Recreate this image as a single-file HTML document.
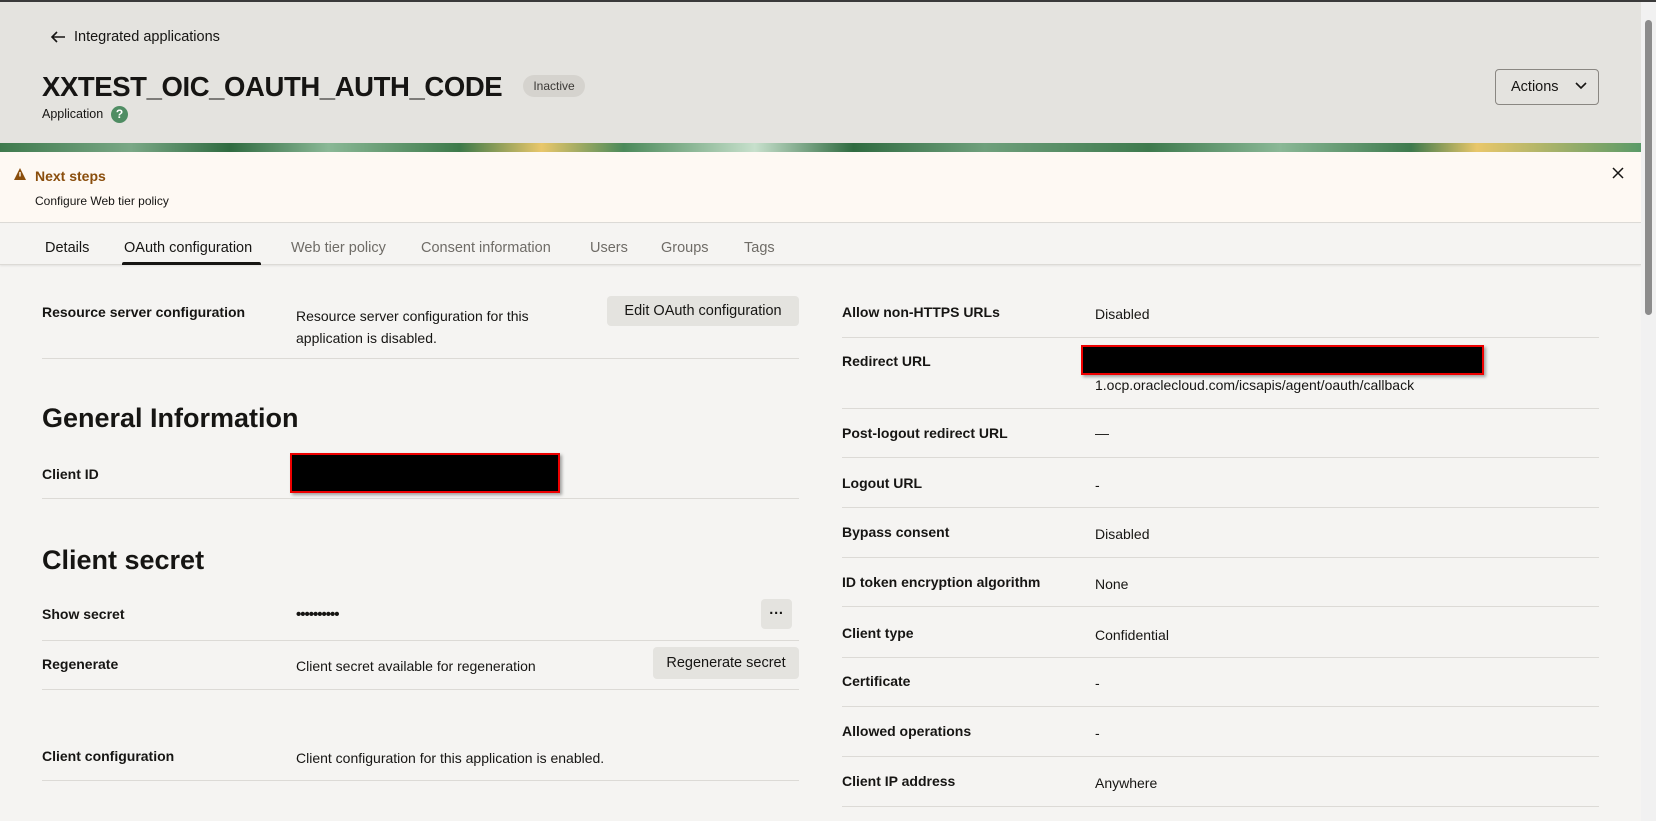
<!DOCTYPE html>
<html><head><meta charset="utf-8"><style>
*{margin:0;padding:0;box-sizing:border-box}
body{width:1656px;height:821px;overflow:hidden;background:#f5f4f2;font-family:"Liberation Sans",sans-serif;color:#161513;position:relative}
.a{position:absolute;line-height:18px;white-space:nowrap}
.l{font-size:14px;font-weight:bold}
.v{font-size:14px}
.hr{position:absolute;height:1px;background:#dcdad6}
.btn{position:absolute;background:#e4e3df;border-radius:4px;font-size:14.5px;display:flex;align-items:center;justify-content:center}
.red{position:absolute;background:#000;border:2px solid #e00;box-shadow:2px 2px 3px rgba(0,0,0,.35)}
.tab{position:absolute;top:239px;font-size:14.5px;color:#6f6c67;line-height:18px}
</style></head><body>
<div style="position:absolute;left:0;top:0;width:1656px;height:2px;background:#3a3a3a"></div>
<div style="position:absolute;left:0;top:2px;width:1641px;height:141px;background:#e4e3df"></div>
<div style="position:absolute;left:0;top:143px;width:1641px;height:9px;background:linear-gradient(90deg,#3e7a4d 0%,#7aa886 8%,#2f6b40 14%,#8ab896 20%,#3d7a4a 28%,#e9c76a 33%,#4b8a5a 38%,#c7e0cc 46%,#2f6b40 52%,#6fa07c 60%,#3e7a4d 70%,#8ab896 78%,#3e7a4d 86%,#e9c76a 90%,#5a9a68 100%)"></div>
<svg style="position:absolute;left:50px;top:30px" width="16" height="14" viewBox="0 0 16 14"><path d="M15 7H2M7 2L2 7l5 5" stroke="#161513" stroke-width="1.6" fill="none"/></svg>
<div class="a" style="left:74px;top:28px;font-size:14.5px">Integrated applications</div>
<div class="a" style="left:42px;top:70px;font-size:27.5px;font-weight:bold;line-height:34px;letter-spacing:-0.4px">XXTEST_OIC_OAUTH_AUTH_CODE</div>
<div class="a" style="left:523px;top:75px;width:62px;height:22px;border-radius:11px;background:#d5d3ce;font-size:12px;line-height:22px;text-align:center;color:#3a3835">Inactive</div>
<div class="a" style="left:42px;top:105px;font-size:12.5px">Application</div>
<div style="position:absolute;left:111px;top:106px;width:17px;height:17px;border-radius:50%;background:#4f8d63;color:#fff;font-size:12px;font-weight:bold;text-align:center;line-height:17px">?</div>
<div class="a" style="left:1495px;top:69px;width:104px;height:36px;border:1px solid #8a8782;border-radius:4px;font-size:14.5px;line-height:34px;padding-left:15px">Actions<svg style="position:absolute;left:79px;top:12px" width="12" height="8" viewBox="0 0 12 8"><path d="M1 1l5 5 5-5" stroke="#161513" stroke-width="1.6" fill="none"/></svg></div>
<div style="position:absolute;left:0;top:152px;width:1641px;height:71px;background:#fef9f3;border-bottom:1px solid #dcdad6"></div>
<svg style="position:absolute;left:14px;top:168px" width="12" height="12" viewBox="0 0 12 12"><path d="M6 0L12 12H0Z" fill="#8a4e0c"/><rect x="5.3" y="4" width="1.4" height="4.5" fill="#fef9f3"/></svg>
<div class="a" style="left:35px;top:167px;font-size:14px;font-weight:bold;color:#8a4e0c">Next steps</div>
<div class="a" style="left:35px;top:192px;font-size:12px">Configure Web tier policy</div>
<svg style="position:absolute;left:1612px;top:167px" width="12" height="12" viewBox="0 0 12 12"><path d="M1 1l10 10M11 1L1 11" stroke="#161513" stroke-width="1.5"/></svg>
<div style="position:absolute;left:0;top:224px;width:1641px;height:41px;background:#f5f4f2;border-bottom:1px solid #dcdad6;box-shadow:0 1px 2px rgba(0,0,0,.08)"></div>
<div class="tab" style="left:45px;color:#161513">Details</div>
<div class="tab" style="left:124px;color:#161513">OAuth configuration</div>
<div style="position:absolute;left:122px;top:262px;width:139px;height:3px;background:#161513;border-radius:2px 2px 0 0"></div>
<div class="tab" style="left:291px">Web tier policy</div>
<div class="tab" style="left:421px">Consent information</div>
<div class="tab" style="left:590px">Users</div>
<div class="tab" style="left:661px">Groups</div>
<div class="tab" style="left:744px">Tags</div>
<div style="position:absolute;left:1641px;top:2px;width:15px;height:819px;background:#f1f1f1"></div>
<div style="position:absolute;left:1645px;top:20px;width:7px;height:295px;border-radius:4px;background:#8c8c8c"></div>

<!-- left column -->
<div class="a l" style="left:42px;top:303px">Resource server configuration</div>
<div class="a v" style="left:296px;top:305px;line-height:22px;white-space:normal;width:260px">Resource server configuration for this application is disabled.</div>
<div class="btn" style="left:607px;top:296px;width:192px;height:30px">Edit OAuth configuration</div>
<div class="hr" style="left:42px;top:358px;width:757px"></div>
<div class="a" style="left:42px;top:401px;font-size:27px;font-weight:bold;line-height:34px">General Information</div>
<div class="a l" style="left:42px;top:465px">Client ID</div>
<div class="red" style="left:290px;top:453px;width:270px;height:40px"></div>
<div class="hr" style="left:42px;top:498px;width:757px"></div>
<div class="a" style="left:42px;top:543px;font-size:27px;font-weight:bold;line-height:34px">Client secret</div>
<div class="a l" style="left:42px;top:605px">Show secret</div>
<div class="a v" style="left:296px;top:606px;font-weight:bold;font-size:15px;letter-spacing:-1px">••••••••••</div>
<div class="btn" style="left:761px;top:599px;width:31px;height:30px;font-weight:bold">···</div>
<div class="hr" style="left:42px;top:640px;width:757px"></div>
<div class="a l" style="left:42px;top:655px">Regenerate</div>
<div class="a v" style="left:296px;top:657px">Client secret available for regeneration</div>
<div class="btn" style="left:653px;top:647px;width:146px;height:32px">Regenerate secret</div>
<div class="hr" style="left:42px;top:689px;width:757px"></div>
<div class="a l" style="left:42px;top:747px">Client configuration</div>
<div class="a v" style="left:296px;top:749px">Client configuration for this application is enabled.</div>
<div class="hr" style="left:42px;top:780px;width:757px"></div>

<!-- right column -->
<div class="a l" style="left:842px;top:303px">Allow non-HTTPS URLs</div><div class="a v" style="left:1095px;top:305px">Disabled</div>
<div class="hr" style="left:842px;top:337px;width:757px"></div>
<div class="a l" style="left:842px;top:352px">Redirect URL</div>
<div class="red" style="left:1081px;top:345px;width:403px;height:30px"></div>
<div class="a v" style="left:1095px;top:376px">1.ocp.oraclecloud.com/icsapis/agent/oauth/callback</div>
<div class="hr" style="left:842px;top:408px;width:757px"></div>
<div class="a l" style="left:842px;top:424px">Post-logout redirect URL</div><div class="a v" style="left:1095px;top:424px">—</div>
<div class="hr" style="left:842px;top:457px;width:757px"></div>
<div class="a l" style="left:842px;top:474px">Logout URL</div><div class="a v" style="left:1095px;top:476px">-</div>
<div class="hr" style="left:842px;top:507px;width:757px"></div>
<div class="a l" style="left:842px;top:523px">Bypass consent</div><div class="a v" style="left:1095px;top:525px">Disabled</div>
<div class="hr" style="left:842px;top:557px;width:757px"></div>
<div class="a l" style="left:842px;top:573px">ID token encryption algorithm</div><div class="a v" style="left:1095px;top:575px">None</div>
<div class="hr" style="left:842px;top:606px;width:757px"></div>
<div class="a l" style="left:842px;top:624px">Client type</div><div class="a v" style="left:1095px;top:626px">Confidential</div>
<div class="hr" style="left:842px;top:657px;width:757px"></div>
<div class="a l" style="left:842px;top:672px">Certificate</div><div class="a v" style="left:1095px;top:674px">-</div>
<div class="hr" style="left:842px;top:706px;width:757px"></div>
<div class="a l" style="left:842px;top:722px">Allowed operations</div><div class="a v" style="left:1095px;top:724px">-</div>
<div class="hr" style="left:842px;top:756px;width:757px"></div>
<div class="a l" style="left:842px;top:772px">Client IP address</div><div class="a v" style="left:1095px;top:774px">Anywhere</div>
<div class="hr" style="left:842px;top:806px;width:757px"></div>
</body></html>
